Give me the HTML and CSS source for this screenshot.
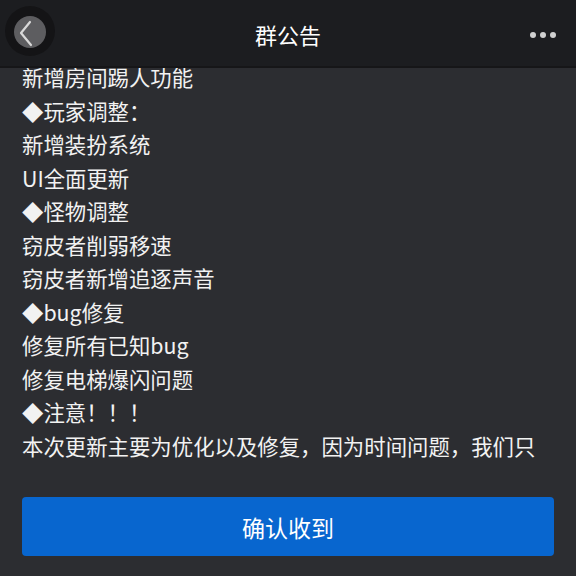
FILE: index.html
```html
<!DOCTYPE html>
<html lang="zh">
<head>
<meta charset="utf-8">
<link rel="stylesheet" href="styles.css">
</head>
<body>
<div class="page">
  <header class="topbar">
    <div class="back">
      <svg width="60" height="60" viewBox="0 0 60 60">
        <circle cx="30" cy="31" r="25" fill="#141416"/>
        <circle cx="30" cy="32" r="16" fill="#5d5d60"/>
        <path d="M30 22 L21 33 L31 45" fill="none" stroke="#d8d8d8" stroke-width="2.2" stroke-linecap="round" stroke-linejoin="round"/>
      </svg>
    </div>
    <div class="title">群公告</div>
    <div class="more"><span></span><span></span><span></span></div>
  </header>
  <main class="content">
    <p>新增房间踢人功能</p>
    <p>◆玩家调整：</p>
    <p>新增装扮系统</p>
    <p>UI全面更新</p>
    <p>◆怪物调整</p>
    <p>窃皮者削弱移速</p>
    <p>窃皮者新增追逐声音</p>
    <p>◆bug修复</p>
    <p>修复所有已知bug</p>
    <p>修复电梯爆闪问题</p>
    <p>◆注意！！！</p>
    <p>本次更新主要为优化以及修复，因为时间问题，我们只</p>
  </main>
  <div class="footer">
    <button class="confirm">确认收到</button>
  </div>
</div>
</body>
</html>
```
FILE: styles.css
```css
* { box-sizing: border-box; }
html, body {
  margin: 0;
  padding: 0;
  background: #2c2d31;
  font-family: "Noto Sans CJK SC", "Noto Sans", sans-serif;
  color: #f0f0f0;
}
.page {
  width: 576px;
  height: 576px;
  overflow: hidden;
  display: flex;
  flex-direction: column;
}
.topbar {
  position: relative;
  z-index: 2;
  height: 68px;
  flex: none;
  background: #1c1d20;
  border-bottom: 2px solid #161618;
  display: flex;
  align-items: center;
  justify-content: center;
}
.back {
  position: absolute;
  left: 0;
  top: 0;
  width: 60px;
  height: 60px;
}
.back svg { display: block; }
.title {
  font-size: 22px;
  color: #ffffff;
  margin-top: 1px;
}
.more {
  position: absolute;
  right: 20px;
  top: 32px;
  display: flex;
  gap: 4px;
}
.more span {
  width: 6px;
  height: 6px;
  border-radius: 50%;
  background: #d0d0d0;
}
.content {
  margin-top: -8px;
  padding: 0 22px;
  flex: 1;
  overflow: hidden;
}
.content p {
  margin: 0;
  font-size: 21.4px;
  line-height: 33.5px;
  white-space: nowrap;
  color: #f2f2f2;
}
.footer {
  flex: none;
  padding: 0 22px 20px;
}
.confirm {
  width: 100%;
  height: 59px;
  border: none;
  border-radius: 4px;
  background: #0866cf;
  color: #ffffff;
  font-family: inherit;
  font-size: 23px;
  display: flex;
  align-items: center;
  justify-content: center;
}
```
